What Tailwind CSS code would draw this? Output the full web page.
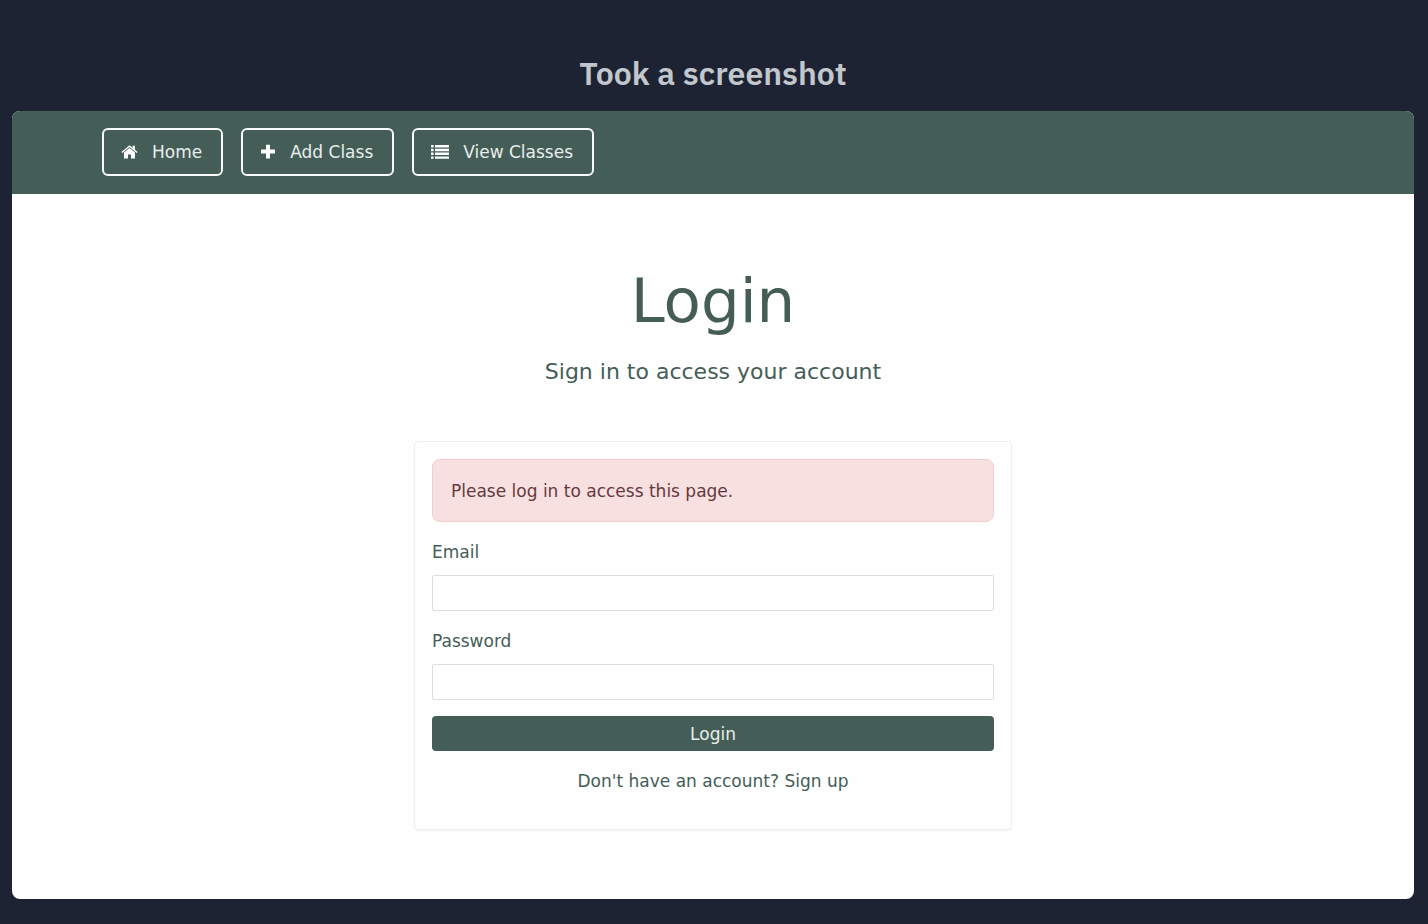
<!DOCTYPE html>
<html lang="en">
<head>
<meta charset="utf-8">
<meta name="viewport" content="width=device-width, initial-scale=1">
<title>Login</title>
<script src="https://cdn.jsdelivr.net/npm/@tailwindcss/browser@4"></script>
</head>
<body class="min-h-screen bg-[#1e2333] pt-[50px] pb-[25px] pl-3 pr-3.5 flex flex-col">
<h1 class="h-[61px] pt-[3px] text-center text-[32px] leading-10 font-semibold text-[#c2c7cd] font-['IBM_Plex_Sans',Roboto,sans-serif]">Took a screenshot</h1>
<div class="flex-1 flex flex-col rounded-lg overflow-hidden bg-[#fefefe] text-[17px] leading-6 text-[#455d57] font-['DejaVu_Sans',sans-serif]">
  <nav class="bg-[#455d57] pt-[17px] pb-[18px] pl-[90px] flex items-center gap-[18px] text-[#e6efec]">
    <a href="#" class="h-12 pl-[17px] pr-[19px] flex items-center gap-[14px] border-2 border-[#f6faf9] rounded-md whitespace-nowrap">
      <svg class="w-[17px] h-4" viewBox="0 0 17 16" fill="#fff" aria-hidden="true"><path d="M8.500 4 14 8.500V14.500H10V10.500H7V14.500H3V8.500Z"/><path d="M.4 8 8.500 1.200 11.600 3.800V1.800H14V5.800L16.600 8 15.700 9 8.500 3 1.300 9Z"/></svg>
      Home
    </a>
    <a href="#" class="h-12 pl-[17px] pr-[19px] flex items-center gap-[14px] border-2 border-[#f6faf9] rounded-md whitespace-nowrap">
      <svg class="w-4 h-4" viewBox="0 0 16 16" fill="#fff" aria-hidden="true"><path d="M6.500.8H9.500Q10 .8 10 1.300V5.500H14.500Q15 5.500 15 6V9Q15 9.500 14.500 9.500H10V13.900Q10 14.400 9.500 14.400H6.500Q6 14.400 6 13.900V9.500H1.500Q1 9.500 1 9V6Q1 5.500 1.500 5.500H6V1.300Q6 .8 6.500 .8Z"/></svg>
      Add Class
    </a>
    <a href="#" class="h-12 pl-[17px] pr-[19px] flex items-center gap-[14px] border-2 border-[#f6faf9] rounded-md whitespace-nowrap">
      <svg class="w-[18px] h-4" viewBox="0 0 18 16" fill="#fff" aria-hidden="true"><path d="M0 1h2.600v2.400H0zM4 1h14v2.400H4zM0 4.800h2.600v2.400H0zM4 4.800h14v2.400H4zM0 8.600h2.600V11H0zM4 8.600h14V11H4zM0 12.400h2.600v2.400H0zM4 12.400h14v2.400H4z"/></svg>
      View Classes
    </a>
  </nav>
  <main class="px-4 pt-[71px] pb-[68px] flex flex-col items-center">
    <h2 class="text-[61px] leading-[72px]">Login</h2>
    <p class="mt-[19px] text-[22px] leading-8">Sign in to access your account</p>
    <form class="mt-[53px] w-full max-w-[598px] p-[17px] pb-9 border border-[#efefef] rounded-sm shadow-xs">
      <div role="alert" class="h-[63px] px-[18px] flex items-center rounded-lg border border-[#f3cccf] bg-[#f8e0e1] text-[#65393f]">Please log in to access this page.</div>
      <label for="email" class="block mt-[18px]">Email</label>
      <input id="email" type="email" class="block mt-[11px] w-full h-9 px-3 rounded-xs border border-[#dcdde2] bg-white">
      <label for="password" class="block mt-[18px]">Password</label>
      <input id="password" type="password" class="block mt-[11px] w-full h-9 px-3 rounded-xs border border-[#dcdde2] bg-white">
      <button type="submit" class="block mt-4 w-full h-[35px] rounded-sm bg-[#455d57] text-[#e6efec]">Login</button>
      <p class="mt-[18px] text-center">Don't have an account? <a href="#">Sign up</a></p>
    </form>
  </main>
</div>
</body>
</html>
